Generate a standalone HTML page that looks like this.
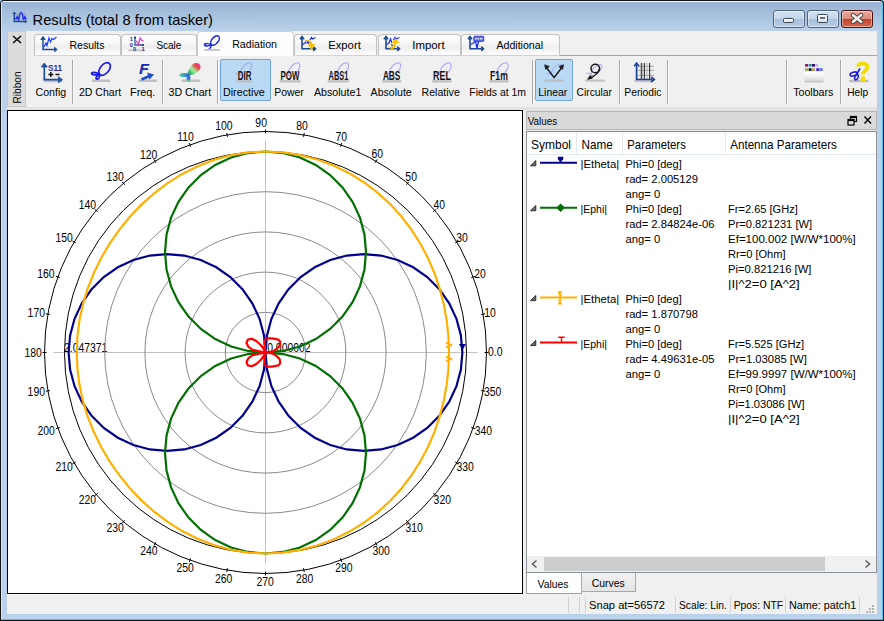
<!DOCTYPE html><html><head><meta charset="utf-8"><style>
html,body{margin:0;padding:0;}
body{width:884px;height:621px;overflow:hidden;position:relative;background:#a9d3ec;font-family:"Liberation Sans",sans-serif;}
.t{position:absolute;white-space:nowrap;line-height:1;}
</style></head><body>
<div style="position:absolute;left:0px;top:0px;width:884px;height:621px;background:#b9d1ea;border:1px solid #111;border-bottom:none;box-sizing:border-box;border-radius:4px 4px 0 0;"></div>
<div style="position:absolute;left:882px;top:3px;width:1px;height:617px;background:#3ec6f0;"></div>
<div style="position:absolute;left:883px;top:3px;width:1px;height:618px;background:#111;"></div>
<div style="position:absolute;left:3px;top:1px;width:877px;height:1px;background:#f4f8fb;"></div>
<div style="position:absolute;left:1px;top:2px;width:881px;height:29px;background:linear-gradient(#98b3d3,#b9d1ea);"></div>
<div style="position:absolute;left:1px;top:2px;width:1px;height:619px;background:#d9e6f3;"></div>
<div style="position:absolute;left:1px;top:619px;width:882px;height:1px;background:#2ad2f2;"></div>
<div style="position:absolute;left:0px;top:620px;width:884px;height:1px;background:#111;"></div>
<svg style="position:absolute;left:0;top:0" width="40" height="30" viewBox="0 0 40 30"><path d="M15 14.5 H27 M15 17.5 H27 M17.5 11.5 V21 M25 11.5 V21" stroke="#8a9aa8" stroke-width="0.7" opacity="0.8"/><path d="M14.3 13 V21.5 H25.5" stroke="#1f4a95" stroke-width="1.5" fill="none"/><path d="M12.3 14 L14.3 11.5 L16.3 14 Z M25 19.5 L27.3 21.5 L25 23.5 Z" fill="#1f4a95"/><path d="M15.5 19.5 L17.3 16.8 L18.8 19.8 C19.5 14 20 12.5 21.2 12.5 C22.4 12.5 22.8 14 23.4 19.8 L24.6 16.8 L26.3 19.5" stroke="#2a2aff" stroke-width="1.5" fill="none"/></svg>
<div style="position:absolute;left:773px;top:10px;width:32px;height:18px;box-sizing:border-box;border:1px solid #52647c;border-radius:3px;background:linear-gradient(#d3e2f2 0%,#c2d5ea 48%,#a6bfdc 52%,#b8cee7 100%);box-shadow:inset 0 0 0 1px rgba(255,255,255,0.45);"></div>
<div style="position:absolute;left:807px;top:10px;width:32px;height:18px;box-sizing:border-box;border:1px solid #52647c;border-radius:3px;background:linear-gradient(#d3e2f2 0%,#c2d5ea 48%,#a6bfdc 52%,#b8cee7 100%);box-shadow:inset 0 0 0 1px rgba(255,255,255,0.45);"></div>
<div style="position:absolute;left:841px;top:10px;width:32px;height:18px;box-sizing:border-box;border:1px solid #4a1418;border-radius:3px;background:linear-gradient(#eaa99b 0%,#dc8e7d 48%,#c1452c 52%,#d36a50 100%);box-shadow:inset 0 0 0 1px rgba(255,255,255,0.45);"></div>
<div style="position:absolute;left:783px;top:18px;width:11px;height:5px;box-sizing:border-box;background:linear-gradient(#fff,#e0e0e0);border:1px solid #3b4658;border-radius:1.5px;"></div>
<div style="position:absolute;left:817px;top:14px;width:11px;height:9px;box-sizing:border-box;background:linear-gradient(#fff,#e0e0e0);border:1px solid #3b4658;border-radius:1.5px;"></div>
<div style="position:absolute;left:820px;top:17px;width:5px;height:2px;background:#5c6e88;"></div>
<svg style="position:absolute;left:849px;top:12px" width="16" height="13" viewBox="0 0 16 13">
<path d="M4 3.2 L12 9.8 M12 3.2 L4 9.8" stroke="#4a3a40" stroke-width="4.4" stroke-linecap="round"/>
<path d="M4 3.2 L12 9.8 M12 3.2 L4 9.8" stroke="#f6f6f6" stroke-width="2.6" stroke-linecap="round"/>
</svg>
<div style="position:absolute;left:7px;top:31px;width:870px;height:76px;background:#f0f0f0;"></div>
<div style="position:absolute;left:7px;top:107px;width:870px;height:3px;background:#e6e6e6;"></div>
<div style="position:absolute;left:7px;top:31px;width:19px;height:76px;box-sizing:border-box;background:#dcdcdc;border:1px solid #c9c9c9;"></div>
<svg style="position:absolute;left:12px;top:35px" width="10" height="9" viewBox="0 0 10 9"><path d="M1 1 L9 8 M9 1 L1 8" stroke="#000" stroke-width="1.4"/></svg>
<div style="position:absolute;left:560px;top:55px;width:317px;height:1px;background:#a5a5a5;"></div>
<div style="position:absolute;left:34px;top:55px;width:526px;height:1px;background:#d2d2d2;"></div>
<div style="position:absolute;left:34px;top:34px;width:87px;height:21px;box-sizing:border-box;border:1px solid #c2c2c2;border-bottom:none;border-radius:4px 4px 0 0;background:linear-gradient(#ffffff 0%,#f6f6f6 45%,#ededed 55%,#fdfdfd 100%);"></div>
<div style="position:absolute;left:121px;top:34px;width:76px;height:21px;box-sizing:border-box;border:1px solid #c2c2c2;border-bottom:none;border-radius:4px 4px 0 0;background:linear-gradient(#ffffff 0%,#f6f6f6 45%,#ededed 55%,#fdfdfd 100%);"></div>
<div style="position:absolute;left:294px;top:34px;width:83px;height:21px;box-sizing:border-box;border:1px solid #c2c2c2;border-bottom:none;border-radius:4px 4px 0 0;background:linear-gradient(#ffffff 0%,#f6f6f6 45%,#ededed 55%,#fdfdfd 100%);"></div>
<div style="position:absolute;left:378px;top:34px;width:83px;height:21px;box-sizing:border-box;border:1px solid #c2c2c2;border-bottom:none;border-radius:4px 4px 0 0;background:linear-gradient(#ffffff 0%,#f6f6f6 45%,#ededed 55%,#fdfdfd 100%);"></div>
<div style="position:absolute;left:461px;top:34px;width:99px;height:21px;box-sizing:border-box;border:1px solid #c2c2c2;border-bottom:none;border-radius:4px 4px 0 0;background:linear-gradient(#ffffff 0%,#f6f6f6 45%,#ededed 55%,#fdfdfd 100%);"></div>
<div style="position:absolute;left:197px;top:31px;width:97px;height:25px;box-sizing:border-box;border:1px solid #d0d0d0;border-bottom:none;border-radius:4px 4px 0 0;background:#fdfdfd;"></div>
<svg style="position:absolute;left:0;top:0;overflow:visible" width="884" height="60" viewBox="0 0 884 60"><path d="M43 38.5 V49.5 H55.5" stroke="#1f4a95" stroke-width="1.5" fill="none"/><path d="M40.8 39.5 L43 36.3 L45.2 39.5 Z M54.5 47.3 L57.2 49.5 L54.5 51.7 Z" fill="#1f4a95" stroke="#1f4a95" stroke-width="0.9"/><path d="M44 47 L46 43 L47 45.5 L49 38 L50.5 42 L52 38.5 L53.5 39.5 L56.5 37" stroke="#1a3cff" stroke-width="1.2" fill="none"/></svg>
<svg style="position:absolute;left:0;top:0;overflow:visible" width="884" height="60" viewBox="0 0 884 60"><rect x="128" y="49" width="17" height="2.5" rx="1.2" fill="#c4c4c4" opacity="0.8"/><text x="129.8" y="40.6" font-size="5.6" font-weight="bold" font-family="Liberation Sans" fill="#2a2a90">1</text><text x="129.8" y="47" font-size="5.6" font-weight="bold" font-family="Liberation Sans" fill="#2a2a90">0</text><text x="133" y="51.2" font-size="5.6" font-weight="bold" font-family="Liberation Sans" fill="#2a2a90">0</text><text x="141.5" y="51.2" font-size="5.6" font-weight="bold" font-family="Liberation Sans" fill="#2a2a90">1</text><path d="M135 37.5 V45 H143" stroke="#2f5aa0" stroke-width="1.3" fill="none"/><circle cx="135" cy="37.5" r="1.1" fill="#1a2a80"/><circle cx="143" cy="45" r="1.1" fill="#1a2a80"/><path d="M135.8 40.5 L138.5 44 L140.2 37.8 L141.6 40.5 L143.5 40.8" stroke="#e030d0" stroke-width="1.2" fill="none"/></svg>
<svg style="position:absolute;left:200px;top:33px;overflow:visible" width="24" height="20" viewBox="0 0 24 20"><ellipse cx="15" cy="7.5" rx="5.5" ry="3.2" transform="rotate(-50 15 7.5)" stroke="#1a2ae0" stroke-width="1.5" fill="none"/><path d="M12 11 C9 14 4 13 4.5 11.5 C5 10 10 10.5 11 12 C12 13.5 9.5 16 9 15" stroke="#1a2ae0" stroke-width="1.5" fill="none"/><rect x="4" y="16" width="16" height="2" fill="#c8c8c8" rx="1"/></svg>
<svg style="position:absolute;left:0;top:0;overflow:visible" width="884" height="60" viewBox="0 0 884 60"><path d="M302 38 V48.8 H314.5" stroke="#1f4a95" stroke-width="1.6" fill="none"/><path d="M299.8 39 L302 35.8 L304.2 39 Z M313.5 46.6 L316.2 48.8 L313.5 51 Z" fill="#1f4a95" stroke="#1f4a95" stroke-width="1"/><path d="M302.5 44.5 L305 43 L306.5 40.5 M310 40 L311.5 37.5 L312.5 39 L315.5 37.5" stroke="#1a2aff" stroke-width="1.3" fill="none"/><path d="M304.5 42 C307 38.5 311.5 39.5 312.5 44 L315.5 44.5 L311.5 50 L307.5 44.5 L310 44.5 C309.5 42.5 307 41.5 304.5 42 Z" fill="#f5c400"/><path d="M306.5 43.5 L308 42 L309 44" stroke="#1a2aff" stroke-width="1.1" fill="none"/></svg>
<svg style="position:absolute;left:0;top:0;overflow:visible" width="884" height="60" viewBox="0 0 884 60"><path d="M386 38 V48.8 H398.5" stroke="#1f4a95" stroke-width="1.6" fill="none"/><path d="M383.8 39 L386 35.8 L388.2 39 Z M397.5 46.6 L400.2 48.8 L397.5 51 Z" fill="#1f4a95" stroke="#1f4a95" stroke-width="1"/><path d="M386.5 44.5 L389 43 L390.5 39 L392 43 M393.5 40 L395 37.5 L396 39 L399.5 37.5" stroke="#1a2aff" stroke-width="1.3" fill="none"/><path d="M388 46.5 C390 50 395 50 396 45 L396.5 43 L399.5 43 L395.5 38 L391.5 43 L394 43 L393.5 45 C392.5 47 390 47.5 388 46.5 Z" fill="#f5c400"/><path d="M391.5 44 L392.5 46" stroke="#1a2aff" stroke-width="1.3" fill="none"/></svg>
<svg style="position:absolute;left:0;top:0;overflow:visible" width="884" height="60" viewBox="0 0 884 60"><path d="M470 38 V48.8 H482.5" stroke="#1f4a95" stroke-width="1.6" fill="none"/><path d="M467.8 39 L470 35.8 L472.2 39 Z M481.5 46.6 L484.2 48.8 L481.5 51 Z" fill="#1f4a95" stroke="#1f4a95" stroke-width="1"/><rect x="473.8" y="36.2" width="10" height="5.2" rx="0.8" fill="#5a6af0" stroke="#3a3ad0" stroke-width="0.9"/><path d="M475 38.8 H483" stroke="#e8ecff" stroke-width="1.6" stroke-dasharray="1.6 0.9"/><path d="M470.5 44.5 L473.5 43 L475 41.5 M475.5 41.5 L477 48 L478.5 41.5" stroke="#1a2aff" stroke-width="1.3" fill="none"/></svg>
<div style="position:absolute;left:72px;top:60px;width:1px;height:44px;background:#a8a8a8;"></div>
<div style="position:absolute;left:73px;top:60px;width:1px;height:44px;background:#fbfbfb;"></div>
<div style="position:absolute;left:162px;top:60px;width:1px;height:44px;background:#a8a8a8;"></div>
<div style="position:absolute;left:163px;top:60px;width:1px;height:44px;background:#fbfbfb;"></div>
<div style="position:absolute;left:217px;top:60px;width:1px;height:44px;background:#a8a8a8;"></div>
<div style="position:absolute;left:218px;top:60px;width:1px;height:44px;background:#fbfbfb;"></div>
<div style="position:absolute;left:532px;top:60px;width:1px;height:44px;background:#a8a8a8;"></div>
<div style="position:absolute;left:533px;top:60px;width:1px;height:44px;background:#fbfbfb;"></div>
<div style="position:absolute;left:619px;top:60px;width:1px;height:44px;background:#a8a8a8;"></div>
<div style="position:absolute;left:620px;top:60px;width:1px;height:44px;background:#fbfbfb;"></div>
<div style="position:absolute;left:667px;top:60px;width:1px;height:44px;background:#a8a8a8;"></div>
<div style="position:absolute;left:668px;top:60px;width:1px;height:44px;background:#fbfbfb;"></div>
<div style="position:absolute;left:786px;top:60px;width:1px;height:44px;background:#a8a8a8;"></div>
<div style="position:absolute;left:787px;top:60px;width:1px;height:44px;background:#fbfbfb;"></div>
<div style="position:absolute;left:840px;top:60px;width:1px;height:44px;background:#a8a8a8;"></div>
<div style="position:absolute;left:841px;top:60px;width:1px;height:44px;background:#fbfbfb;"></div>
<div style="position:absolute;left:220px;top:59px;width:51px;height:42px;box-sizing:border-box;border:1px solid #72a6dc;border-radius:2px;background:#b9d9f5;"></div>
<div style="position:absolute;left:535px;top:59px;width:38px;height:42px;box-sizing:border-box;border:1px solid #72a6dc;border-radius:2px;background:#b9d9f5;"></div>
<svg style="position:absolute;left:40px;top:58px;overflow:visible" width="26" height="26" viewBox="0 0 26 26"><rect x="3.5" y="21.8" width="19" height="2.5" rx="1.2" fill="#b4b4b4" opacity="0.8"/><path d="M4.3 7 V21.7 H20" stroke="#1f4f9f" stroke-width="1.7" fill="none"/><path d="M1.3 9 L4.3 5 L7.3 9 Z M18.5 18.7 L22.5 21.7 L18.5 24.7 Z" fill="#1f4f9f" stroke="#1f4f9f" stroke-width="0.8"/><text x="8" y="12.6" font-size="9.5" font-weight="bold" font-family="Liberation Sans" fill="#2a2aa8" textLength="14" lengthAdjust="spacingAndGlyphs">S11</text><path d="M8.3 16.5 H13.3 M10.8 14 V19 M15.5 16.5 H19.5" stroke="#111" stroke-width="1.5"/></svg>
<svg style="position:absolute;left:86px;top:58px;overflow:visible" width="30" height="26" viewBox="0 0 30 26"><rect x="5.5" y="21.5" width="19" height="2.5" rx="1.2" fill="#b4b4b4" opacity="0.8"/><ellipse cx="18.6" cy="11" rx="7.3" ry="4.4" transform="rotate(-50 18.6 11)" stroke="#1a1ae8" stroke-width="1.7" fill="none"/><path d="M13.5 16 C10 14 5.5 14 5.5 15.5 C5.5 17 10.5 17.5 13.5 16 C14.5 18.5 12 22 10.5 21 C9 20 11 17.5 13.5 16" stroke="#1a1ae8" stroke-width="1.7" fill="none"/></svg>
<svg style="position:absolute;left:134px;top:58px;overflow:visible" width="30" height="26" viewBox="0 0 30 26"><rect x="4" y="21.5" width="19" height="2.5" rx="1.2" fill="#b4b4b4" opacity="0.8"/><text x="5" y="16.3" font-size="14.5" font-weight="bold" font-style="italic" font-family="Liberation Sans" fill="#1a2ab0" textLength="10" lengthAdjust="spacingAndGlyphs">F</text><path d="M7.5 21.5 L15.5 18" stroke="#1a50d0" stroke-width="2.6"/><path d="M13 14.5 L20 16.5 L15.5 21.5 Z" fill="#1a50d0"/></svg>
<svg style="position:absolute;left:176px;top:58px;overflow:visible" width="30" height="26" viewBox="0 0 30 26"><defs><linearGradient id="g3d" x1="1" y1="0" x2="0" y2="1"><stop offset="0" stop-color="#ff30ff"/><stop offset="0.28" stop-color="#e84040"/><stop offset="0.55" stop-color="#a0f0a0"/><stop offset="0.78" stop-color="#40c060"/><stop offset="1" stop-color="#3050f0"/></linearGradient><linearGradient id="g3s" x1="0" y1="0" x2="1" y2="0"><stop offset="0" stop-color="#50e090"/><stop offset="1" stop-color="#3060f0"/></linearGradient></defs><rect x="5.5" y="21.5" width="19" height="2.5" rx="1.2" fill="#b4b4b4" opacity="0.8"/><ellipse cx="8" cy="17" rx="4.8" ry="2" fill="url(#g3s)"/><ellipse cx="12.5" cy="19.8" rx="1.9" ry="3.6" fill="#4070e0"/><ellipse cx="12.5" cy="22.5" rx="1.2" ry="1" fill="#40e080"/><path d="M11.2 17.2 C12 12 15 6 19.5 5 C23.5 4.2 25.5 7.5 24 11 C22 15 16 17.8 11.2 17.2 Z" fill="url(#g3d)"/></svg>
<svg style="position:absolute;left:0;top:0;overflow:visible" width="884" height="100" viewBox="0 0 884 100"><rect x="236.7" y="80" width="15.8" height="2.5" rx="1.2" fill="#b8b8b8" opacity="0.85"/><ellipse cx="246.0" cy="69.5" rx="8" ry="4" transform="rotate(-52 246.0 69.5)" stroke="#a8a8f4" stroke-width="1.1" fill="none"/><path d="M241.5 75.0 C238.0 73.5 235.0 72.5 236.0 74.0" stroke="#a8a8f4" stroke-width="1.1" fill="none"/><text x="237.7" y="79.9" font-size="13.4" font-weight="bold" font-family="Liberation Sans" fill="#111" stroke="#fff" stroke-width="1.2" stroke-opacity="0.35" paint-order="stroke" textLength="13.8" lengthAdjust="spacingAndGlyphs">DIR</text></svg>
<svg style="position:absolute;left:0;top:0;overflow:visible" width="884" height="100" viewBox="0 0 884 100"><rect x="279.6" y="80" width="20.9" height="2.5" rx="1.2" fill="#b8b8b8" opacity="0.85"/><ellipse cx="294.0" cy="69.5" rx="8" ry="4" transform="rotate(-52 294.0 69.5)" stroke="#a8a8f4" stroke-width="1.1" fill="none"/><path d="M289.5 75.0 C286.0 73.5 283.0 72.5 284.0 74.0" stroke="#a8a8f4" stroke-width="1.1" fill="none"/><text x="280.6" y="79.9" font-size="13.4" font-weight="bold" font-family="Liberation Sans" fill="#111" stroke="#fff" stroke-width="1.2" stroke-opacity="0.35" paint-order="stroke" textLength="18.9" lengthAdjust="spacingAndGlyphs">POW</text></svg>
<svg style="position:absolute;left:0;top:0;overflow:visible" width="884" height="100" viewBox="0 0 884 100"><rect x="327.6" y="80" width="21.7" height="2.5" rx="1.2" fill="#b8b8b8" opacity="0.85"/><ellipse cx="342.8" cy="69.5" rx="8" ry="4" transform="rotate(-52 342.8 69.5)" stroke="#a8a8f4" stroke-width="1.1" fill="none"/><path d="M338.3 75.0 C334.8 73.5 331.8 72.5 332.8 74.0" stroke="#a8a8f4" stroke-width="1.1" fill="none"/><text x="328.6" y="79.9" font-size="13.4" font-weight="bold" font-family="Liberation Sans" fill="#111" stroke="#fff" stroke-width="1.2" stroke-opacity="0.35" paint-order="stroke" textLength="19.7" lengthAdjust="spacingAndGlyphs">ABS1</text></svg>
<svg style="position:absolute;left:0;top:0;overflow:visible" width="884" height="100" viewBox="0 0 884 100"><rect x="381.9" y="80" width="19.4" height="2.5" rx="1.2" fill="#b8b8b8" opacity="0.85"/><ellipse cx="394.8" cy="69.5" rx="8" ry="4" transform="rotate(-52 394.8 69.5)" stroke="#a8a8f4" stroke-width="1.1" fill="none"/><path d="M390.3 75.0 C386.8 73.5 383.8 72.5 384.8 74.0" stroke="#a8a8f4" stroke-width="1.1" fill="none"/><text x="382.9" y="79.9" font-size="13.4" font-weight="bold" font-family="Liberation Sans" fill="#111" stroke="#fff" stroke-width="1.2" stroke-opacity="0.35" paint-order="stroke" textLength="17.4" lengthAdjust="spacingAndGlyphs">ABS</text></svg>
<svg style="position:absolute;left:0;top:0;overflow:visible" width="884" height="100" viewBox="0 0 884 100"><rect x="432.1" y="80" width="19.7" height="2.5" rx="1.2" fill="#b8b8b8" opacity="0.85"/><ellipse cx="445.3" cy="69.5" rx="8" ry="4" transform="rotate(-52 445.3 69.5)" stroke="#a8a8f4" stroke-width="1.1" fill="none"/><path d="M440.8 75.0 C437.3 73.5 434.3 72.5 435.3 74.0" stroke="#a8a8f4" stroke-width="1.1" fill="none"/><text x="433.1" y="79.9" font-size="13.4" font-weight="bold" font-family="Liberation Sans" fill="#111" stroke="#fff" stroke-width="1.2" stroke-opacity="0.35" paint-order="stroke" textLength="17.7" lengthAdjust="spacingAndGlyphs">REL</text></svg>
<svg style="position:absolute;left:0;top:0;overflow:visible" width="884" height="100" viewBox="0 0 884 100"><rect x="489.1" y="80" width="19.7" height="2.5" rx="1.2" fill="#b8b8b8" opacity="0.85"/><ellipse cx="502.3" cy="69.5" rx="8" ry="4" transform="rotate(-52 502.3 69.5)" stroke="#a8a8f4" stroke-width="1.1" fill="none"/><path d="M497.8 75.0 C494.3 73.5 491.3 72.5 492.3 74.0" stroke="#a8a8f4" stroke-width="1.1" fill="none"/><text x="490.1" y="79.9" font-size="13.4" font-weight="bold" font-family="Liberation Sans" fill="#111" stroke="#fff" stroke-width="1.2" stroke-opacity="0.35" paint-order="stroke" textLength="17.7" lengthAdjust="spacingAndGlyphs">F1m</text></svg>
<svg style="position:absolute;left:0;top:0;overflow:visible" width="884" height="60" viewBox="0 0 884 60"><rect x="544" y="79.5" width="20" height="2.2" rx="1.1" fill="#b8b8b8" opacity="0.8"/><ellipse cx="556.5" cy="70" rx="7" ry="3.3" transform="rotate(-52 556.5 70)" stroke="#a8a8f0" stroke-width="1" fill="none"/><path d="M552 75 C548.5 73.5 546 73 546.5 74.5" stroke="#a8a8f0" stroke-width="1" fill="none"/><path d="M546 67 L554.1 77.6 L562.2 67" stroke="#1a1a1a" stroke-width="1.5" fill="none"/><path d="M544.6 64.8 L549.4 66.4 L545.6 69.4 Z M563.6 64.8 L558.8 66.4 L562.6 69.4 Z" fill="#1a1a1a" stroke="#1a1a1a" stroke-width="0.6"/></svg>
<svg style="position:absolute;left:0;top:0;overflow:visible" width="884" height="60" viewBox="0 0 884 60"><rect x="585" y="79.5" width="20" height="2.2" rx="1.1" fill="#b8b8b8" opacity="0.8"/><ellipse cx="596.5" cy="70" rx="7" ry="3.3" transform="rotate(-45 596.5 70)" stroke="#a8a8f0" stroke-width="1" fill="none"/><path d="M592 74 C588.5 73 586 72.5 586.5 74" stroke="#a8a8f0" stroke-width="1" fill="none"/><circle cx="595.3" cy="68.5" r="4.3" stroke="#1a1a1a" stroke-width="1.5" fill="none"/><path d="M599.6 68.5 C599 73 595 76 589 78.8" stroke="#1a1a1a" stroke-width="1.5" fill="none"/><path d="M587 79.8 L590.2 74.8 L592.8 78.6 Z" fill="#111"/></svg>
<svg style="position:absolute;left:0;top:0;overflow:visible" width="884" height="60" viewBox="0 0 884 60"><rect x="634" y="79.8" width="19" height="2.4" rx="1.2" fill="#bcbcbc" opacity="0.8"/><path d="M638 66.3 H654 M638 70.4 H654 M638 75.3 H654" stroke="#9a9a9a" stroke-width="0.9"/><path d="M641.7 63 V79.5 M644.4 63 V79.5 M649.6 63 V79.5" stroke="#333" stroke-width="1.1"/><path d="M640.6 63 V79.5 M647 63 V79.5" stroke="#aaa" stroke-width="0.8"/><path d="M636.6 64.5 V79.5 H652.5" stroke="#1a3f95" stroke-width="1.7" fill="none"/><path d="M634.2 66.2 L636.6 63 L639 66.2" stroke="#1a3f95" stroke-width="1.6" fill="none"/><path d="M651 77 L654.3 79.5 L651 82" stroke="#1a3f95" stroke-width="1.6" fill="none"/></svg>
<svg style="position:absolute;left:0;top:0;overflow:visible" width="884" height="60" viewBox="0 0 884 60"><defs><linearGradient id="gtb" x1="0" y1="0" x2="0" y2="1"><stop offset="0" stop-color="#ffffff"/><stop offset="0.5" stop-color="#f0f0f0"/><stop offset="1" stop-color="#d4d4d4"/></linearGradient></defs><rect x="804.5" y="63" width="19" height="9" fill="#ececec"/><rect x="805" y="64" width="3" height="2.6" fill="#a0106e"/><rect x="808.6" y="64" width="3" height="2.6" fill="#2a8a9a"/><rect x="812" y="64" width="3" height="2.6" fill="#2a1070"/><rect x="815.4" y="64" width="3" height="2.6" fill="#c8b0e0"/><rect x="818.8" y="64" width="3" height="2.6" fill="#d8f4ff"/><rect x="805" y="68.3" width="3" height="2.6" fill="#98b040"/><rect x="808.6" y="68.3" width="3" height="2.6" fill="#080820"/><rect x="812" y="68.3" width="3" height="2.6" fill="#b0a060"/><rect x="816.3" y="68.3" width="3" height="2.6" fill="#3010f0"/><rect x="819.7" y="68.3" width="3" height="2.6" fill="#5868e0"/><rect x="804.5" y="72" width="19" height="9.5" fill="url(#gtb)"/><rect x="804.5" y="81" width="19" height="1.5" fill="#c4c4c4"/></svg>
<svg style="position:absolute;left:0;top:0;overflow:visible" width="884" height="60" viewBox="0 0 884 60"><rect x="849" y="79.8" width="19.5" height="2.4" rx="1.2" fill="#b4b4b4" opacity="0.85"/><path d="M858 66.5 C858 62.5 867.5 62.5 867.5 67 C867.5 70.5 862.8 71 862.8 74.5" stroke="#f4dc00" stroke-width="3.8" fill="none"/><rect x="860.8" y="76.5" width="4.2" height="5.5" fill="#f4dc00"/><ellipse cx="853.6" cy="74" rx="3.6" ry="1.9" transform="rotate(-15 853.6 74)" stroke="#1a1ae0" stroke-width="1.6" fill="none"/><ellipse cx="856.5" cy="77.2" rx="1.5" ry="2.8" transform="rotate(25 856.5 77.2)" stroke="#1a1ae0" stroke-width="1.5" fill="none"/><path d="M856.5 74.5 L860 68.5" stroke="#1a1ae0" stroke-width="1.6"/></svg>
<div style="position:absolute;left:7px;top:110px;width:516px;height:484px;box-sizing:border-box;border:1px solid #000;background:#fff;"></div>
<svg style="position:absolute;left:0;top:0" width="884" height="621" viewBox="0 0 884 621" font-family="Liberation Sans, sans-serif"><path d="M53.5 352.5 H477.5 M265.5 140.5 V564.5" stroke="#c0c0c0" stroke-width="1"/><text x="64.1" y="351.6" font-size="10.4" text-anchor="start" transform="translate(0 351.6) scale(1 1.17) translate(0 -351.6)" fill="#000">2.047371</text><text x="267.2" y="351.6" font-size="10.4" text-anchor="start" transform="translate(0 351.6) scale(1 1.17) translate(0 -351.6)" fill="#000">0.000002</text><circle cx="265.5" cy="352.5" r="40.20" stroke="#8a8a8a" stroke-width="1" fill="none"/><circle cx="265.5" cy="352.5" r="80.40" stroke="#8a8a8a" stroke-width="1" fill="none"/><circle cx="265.5" cy="352.5" r="120.60" stroke="#8a8a8a" stroke-width="1" fill="none"/><circle cx="265.5" cy="352.5" r="160.80" stroke="#8a8a8a" stroke-width="1" fill="none"/><circle cx="265.5" cy="352.5" r="201" stroke="#000" stroke-width="1" fill="none"/><circle cx="265.5" cy="352.5" r="221" stroke="#000" stroke-width="1" fill="none"/><path d="M484.50 352.50 L488.50 352.50 M481.17 314.47 L485.11 313.78 M471.29 277.60 L475.05 276.23 M455.16 243.00 L458.62 241.00 M433.26 211.73 L436.33 209.16 M406.27 184.74 L408.84 181.67 M375.00 162.84 L377.00 159.38 M340.40 146.71 L341.77 142.95 M303.53 136.83 L304.22 132.89 M265.50 133.50 L265.50 129.50 M227.47 136.83 L226.78 132.89 M190.60 146.71 L189.23 142.95 M156.00 162.84 L154.00 159.38 M124.73 184.74 L122.16 181.67 M97.74 211.73 L94.67 209.16 M75.84 243.00 L72.38 241.00 M59.71 277.60 L55.95 276.23 M49.83 314.47 L45.89 313.78 M46.50 352.50 L42.50 352.50 M49.83 390.53 L45.89 391.22 M59.71 427.40 L55.95 428.77 M75.84 462.00 L72.38 464.00 M97.74 493.27 L94.67 495.84 M124.73 520.26 L122.16 523.33 M156.00 542.16 L154.00 545.62 M190.60 558.29 L189.23 562.05 M227.47 568.17 L226.78 572.11 M265.50 571.50 L265.50 575.50 M303.53 568.17 L304.22 572.11 M340.40 558.29 L341.77 562.05 M375.00 542.16 L377.00 545.62 M406.27 520.26 L408.84 523.33 M433.26 493.27 L436.33 495.84 M455.16 462.00 L458.62 464.00 M471.29 427.40 L475.05 428.77 M481.17 390.53 L485.11 391.22" stroke="#000" stroke-width="1"/><text x="495.20" y="356.35" font-size="10.4" text-anchor="middle" transform="translate(0 356.35) scale(1 1.17) translate(0 -356.35)" fill="#000">0.0</text><text x="489.95" y="317.05" font-size="10.4" text-anchor="middle" transform="translate(0 317.05) scale(1 1.17) translate(0 -317.05)" fill="#000">10</text><text x="480.00" y="278.05" font-size="10.4" text-anchor="middle" transform="translate(0 278.05) scale(1 1.17) translate(0 -278.05)" fill="#000">20</text><text x="461.95" y="242.45" font-size="10.4" text-anchor="middle" transform="translate(0 242.45) scale(1 1.17) translate(0 -242.45)" fill="#000">30</text><text x="439.25" y="208.85" font-size="10.4" text-anchor="middle" transform="translate(0 208.85) scale(1 1.17) translate(0 -208.85)" fill="#000">40</text><text x="411.15" y="181.35" font-size="10.4" text-anchor="middle" transform="translate(0 181.35) scale(1 1.17) translate(0 -181.35)" fill="#000">50</text><text x="377.20" y="158.35" font-size="10.4" text-anchor="middle" transform="translate(0 158.35) scale(1 1.17) translate(0 -158.35)" fill="#000">60</text><text x="341.25" y="141.15" font-size="10.4" text-anchor="middle" transform="translate(0 141.15) scale(1 1.17) translate(0 -141.15)" fill="#000">70</text><text x="302.00" y="129.85" font-size="10.4" text-anchor="middle" transform="translate(0 129.85) scale(1 1.17) translate(0 -129.85)" fill="#000">80</text><text x="261.15" y="127.35" font-size="10.4" text-anchor="middle" transform="translate(0 127.35) scale(1 1.17) translate(0 -127.35)" fill="#000">90</text><text x="224.00" y="130.35" font-size="10.4" text-anchor="middle" transform="translate(0 130.35) scale(1 1.17) translate(0 -130.35)" fill="#000">100</text><text x="185.45" y="140.95" font-size="10.4" text-anchor="middle" transform="translate(0 140.95) scale(1 1.17) translate(0 -140.95)" fill="#000">110</text><text x="148.55" y="158.65" font-size="10.4" text-anchor="middle" transform="translate(0 158.65) scale(1 1.17) translate(0 -158.65)" fill="#000">120</text><text x="115.25" y="180.95" font-size="10.4" text-anchor="middle" transform="translate(0 180.95) scale(1 1.17) translate(0 -180.95)" fill="#000">130</text><text x="87.30" y="209.35" font-size="10.4" text-anchor="middle" transform="translate(0 209.35) scale(1 1.17) translate(0 -209.35)" fill="#000">140</text><text x="64.25" y="241.85" font-size="10.4" text-anchor="middle" transform="translate(0 241.85) scale(1 1.17) translate(0 -241.85)" fill="#000">150</text><text x="45.85" y="278.05" font-size="10.4" text-anchor="middle" transform="translate(0 278.05) scale(1 1.17) translate(0 -278.05)" fill="#000">160</text><text x="36.30" y="317.35" font-size="10.4" text-anchor="middle" transform="translate(0 317.35) scale(1 1.17) translate(0 -317.35)" fill="#000">170</text><text x="33.05" y="356.85" font-size="10.4" text-anchor="middle" transform="translate(0 356.85) scale(1 1.17) translate(0 -356.85)" fill="#000">180</text><text x="36.30" y="396.35" font-size="10.4" text-anchor="middle" transform="translate(0 396.35) scale(1 1.17) translate(0 -396.35)" fill="#000">190</text><text x="46.20" y="435.35" font-size="10.4" text-anchor="middle" transform="translate(0 435.35) scale(1 1.17) translate(0 -435.35)" fill="#000">200</text><text x="64.25" y="470.75" font-size="10.4" text-anchor="middle" transform="translate(0 470.75) scale(1 1.17) translate(0 -470.75)" fill="#000">210</text><text x="87.30" y="504.35" font-size="10.4" text-anchor="middle" transform="translate(0 504.35) scale(1 1.17) translate(0 -504.35)" fill="#000">220</text><text x="115.25" y="531.95" font-size="10.4" text-anchor="middle" transform="translate(0 531.95) scale(1 1.17) translate(0 -531.95)" fill="#000">230</text><text x="148.95" y="555.05" font-size="10.4" text-anchor="middle" transform="translate(0 555.05) scale(1 1.17) translate(0 -555.05)" fill="#000">240</text><text x="185.10" y="572.05" font-size="10.4" text-anchor="middle" transform="translate(0 572.05) scale(1 1.17) translate(0 -572.05)" fill="#000">250</text><text x="223.65" y="583.35" font-size="10.4" text-anchor="middle" transform="translate(0 583.35) scale(1 1.17) translate(0 -583.35)" fill="#000">260</text><text x="265.25" y="586.25" font-size="10.4" text-anchor="middle" transform="translate(0 586.25) scale(1 1.17) translate(0 -586.25)" fill="#000">270</text><text x="304.60" y="582.75" font-size="10.4" text-anchor="middle" transform="translate(0 582.75) scale(1 1.17) translate(0 -582.75)" fill="#000">280</text><text x="343.90" y="572.05" font-size="10.4" text-anchor="middle" transform="translate(0 572.05) scale(1 1.17) translate(0 -572.05)" fill="#000">290</text><text x="381.15" y="555.05" font-size="10.4" text-anchor="middle" transform="translate(0 555.05) scale(1 1.17) translate(0 -555.05)" fill="#000">300</text><text x="414.10" y="532.05" font-size="10.4" text-anchor="middle" transform="translate(0 532.05) scale(1 1.17) translate(0 -532.05)" fill="#000">310</text><text x="442.30" y="504.35" font-size="10.4" text-anchor="middle" transform="translate(0 504.35) scale(1 1.17) translate(0 -504.35)" fill="#000">320</text><text x="465.10" y="470.75" font-size="10.4" text-anchor="middle" transform="translate(0 470.75) scale(1 1.17) translate(0 -470.75)" fill="#000">330</text><text x="483.35" y="435.35" font-size="10.4" text-anchor="middle" transform="translate(0 435.35) scale(1 1.17) translate(0 -435.35)" fill="#000">340</text><text x="492.75" y="396.35" font-size="10.4" text-anchor="middle" transform="translate(0 396.35) scale(1 1.17) translate(0 -396.35)" fill="#000">350</text><path d="M462.40,352.50 L460.90,335.40 L456.46,318.83 L449.21,303.27 L439.37,289.22 L427.23,277.08 L413.18,267.24 L397.62,259.99 L381.05,255.55 L363.95,254.05 L346.85,255.55 L330.28,259.99 L314.73,267.24 L300.67,277.08 L288.53,289.22 L278.69,303.27 L271.44,318.83 L267.00,335.40 L265.50,352.50 L264.00,335.40 L259.56,318.83 L252.31,303.27 L242.47,289.22 L230.33,277.08 L216.28,267.24 L200.72,259.99 L184.15,255.55 L167.05,254.05 L149.95,255.55 L133.38,259.99 L117.83,267.24 L103.77,277.08 L91.63,289.22 L81.79,303.28 L74.54,318.83 L70.10,335.40 L68.60,352.50 L70.10,369.60 L74.54,386.17 L81.79,401.72 L91.63,415.78 L103.77,427.92 L117.83,437.76 L133.38,445.01 L149.95,449.45 L167.05,450.95 L184.15,449.45 L200.72,445.01 L216.27,437.76 L230.33,427.92 L242.47,415.78 L252.31,401.72 L259.56,386.17 L264.00,369.60 L265.50,352.50 L267.00,369.60 L271.44,386.17 L278.69,401.72 L288.53,415.78 L300.67,427.92 L314.72,437.76 L330.28,445.01 L346.85,449.45 L363.95,450.95 L381.05,449.45 L397.62,445.01 L413.18,437.76 L427.23,427.92 L439.37,415.78 L449.21,401.72 L456.46,386.17 L460.90,369.60 L462.40,352.50Z" stroke="#00008c" stroke-width="2.2" fill="none"/><path d="M265.50,352.50 L282.95,350.97 L299.87,346.44 L315.75,339.04 L330.10,328.99 L342.49,316.60 L352.54,302.25 L359.94,286.37 L364.47,269.45 L366.00,252.00 L364.47,234.55 L359.94,217.63 L352.54,201.75 L342.49,187.40 L330.10,175.01 L315.75,164.96 L299.87,157.56 L282.95,153.03 L265.50,151.50 L248.05,153.03 L231.13,157.56 L215.25,164.96 L200.90,175.01 L188.51,187.40 L178.46,201.75 L171.06,217.63 L166.53,234.55 L165.00,252.00 L166.53,269.45 L171.06,286.37 L178.46,302.25 L188.51,316.60 L200.90,328.99 L215.25,339.04 L231.13,346.44 L248.05,350.97 L265.50,352.50 L248.05,354.03 L231.13,358.56 L215.25,365.96 L200.90,376.01 L188.51,388.40 L178.46,402.75 L171.06,418.63 L166.53,435.55 L165.00,453.00 L166.53,470.45 L171.06,487.37 L178.46,503.25 L188.51,517.60 L200.90,529.99 L215.25,540.04 L231.13,547.44 L248.05,551.97 L265.50,553.50 L282.95,551.97 L299.87,547.44 L315.75,540.04 L330.10,529.99 L342.49,517.60 L352.54,503.25 L359.94,487.37 L364.47,470.45 L366.00,453.00 L364.47,435.55 L359.94,418.63 L352.54,402.75 L342.49,388.40 L330.10,376.01 L315.75,365.96 L299.87,358.56 L282.95,354.03 L265.50,352.50Z" stroke="#007000" stroke-width="2.2" fill="none"/><path d="M449.00,352.50 L448.43,336.50 L446.73,320.54 L443.88,304.70 L439.86,289.04 L434.64,273.63 L428.20,258.56 L420.53,243.95 L411.61,229.90 L401.44,216.56 L390.05,204.06 L377.49,192.57 L363.81,182.22 L349.13,173.16 L333.55,165.55 L317.22,159.48 L300.31,155.07 L283.01,152.40 L265.50,151.50 L248.00,152.45 L230.72,155.27 L213.89,159.87 L197.67,166.15 L182.23,173.93 L167.67,183.05 L154.06,193.34 L141.44,204.65 L129.84,216.84 L119.28,229.80 L109.76,243.45 L101.33,257.72 L94.04,272.55 L87.93,287.87 L83.08,303.62 L79.56,319.71 L77.42,336.04 L76.70,352.50 L77.42,368.96 L79.56,385.29 L83.08,401.38 L87.93,417.13 L94.04,432.45 L101.33,447.28 L109.76,461.55 L119.28,475.20 L129.84,488.16 L141.44,500.35 L154.06,511.66 L167.67,521.95 L182.23,531.07 L197.67,538.85 L213.89,545.13 L230.72,549.73 L248.00,552.55 L265.50,553.50 L283.01,552.60 L300.31,549.93 L317.22,545.52 L333.55,539.45 L349.13,531.84 L363.81,522.78 L377.49,512.43 L390.05,500.94 L401.44,488.44 L411.61,475.10 L420.53,461.05 L428.20,446.44 L434.64,431.37 L439.86,415.96 L443.88,400.30 L446.73,384.46 L448.43,368.50 L449.00,352.50Z" stroke="#ffb000" stroke-width="2.2" fill="none"/><path d="M265.50,352.50 L252.70,349.80 L248.30,346.70 L246.50,342.70 L247.90,339.60 L251.80,338.70 L256.30,341.00 L260.70,345.00 L263.40,348.50Z M265.50,352.50 L252.70,355.20 L248.30,358.30 L246.50,362.30 L247.90,365.40 L251.80,366.30 L256.30,364.00 L260.70,360.00 L263.40,356.50Z M265.50,352.50 L264.60,345.40 L264.60,340.10 L266.90,338.30 L272.20,338.30 L278.40,339.60 L280.20,341.80 L279.80,345.40 L276.70,348.90 L272.20,351.60Z M265.50,352.50 L264.60,359.60 L264.60,364.90 L266.90,366.70 L272.20,366.70 L278.40,365.40 L280.20,363.20 L279.80,359.60 L276.70,356.10 L272.20,353.40Z" stroke="#ff0000" stroke-width="2.2" fill="none" stroke-linejoin="round"/><path d="M459 344 L466 344 L462.5 350 Z" fill="#00008c"/><path d="M446 342.5 L452 346 M446 347.5 L452 344 M446 361.5 L452 358 M446 356.5 L452 360" stroke="#ffb000" stroke-width="1.6"/></svg>
<div style="position:absolute;left:523px;top:107px;width:3px;height:487px;background:#f0f0f0;"></div>
<div style="position:absolute;left:7px;top:107px;width:870px;height:3px;background:#e3e3e3;"></div>
<div style="position:absolute;left:7px;top:110px;width:1px;height:0px;"></div>
<div style="position:absolute;left:523px;top:107px;width:354px;height:4px;background:#e3e3e3;"></div>
<div style="position:absolute;left:526px;top:111px;width:351px;height:19px;box-sizing:border-box;background:#dadada;border:1px solid #b4b4b4;"></div>
<div style="position:absolute;left:526px;top:130px;width:351px;height:1px;background:#eeeeee;"></div>
<svg style="position:absolute;left:846px;top:114px" width="30" height="14" viewBox="0 0 30 14"><rect x="4.5" y="2.5" width="6" height="5" fill="none" stroke="#000" stroke-width="1.2"/><rect x="4.5" y="2.5" width="6" height="1.6" fill="#000"/><rect x="2" y="5.5" width="6" height="5.5" fill="#dadada" stroke="#000" stroke-width="1.2"/><rect x="2" y="5.5" width="6" height="1.6" fill="#000"/><path d="M18.5 2.5 L25 9.5 M25 2.5 L18.5 9.5" stroke="#000" stroke-width="1.4"/></svg>
<div style="position:absolute;left:526px;top:131px;width:351px;height:442px;box-sizing:border-box;background:#fff;border:1px solid #8f959c;border-top:1px solid #828790;"></div>
<div style="position:absolute;left:527px;top:132px;width:349px;height:23px;background:#fff;border-bottom:1px solid #dfe8f3;box-sizing:border-box;"></div>
<div style="position:absolute;left:576px;top:132px;width:1px;height:23px;background:#e3eaf3;"></div>
<div style="position:absolute;left:622px;top:132px;width:1px;height:23px;background:#e3eaf3;"></div>
<div style="position:absolute;left:725px;top:132px;width:1px;height:23px;background:#e3eaf3;"></div>
<svg style="position:absolute;left:0;top:0" width="884" height="621" viewBox="0 0 884 621"><path d="M530.5 165.8 L535.8 165.8 L535.8 160.60000000000002 Z" fill="#707070" stroke="#202020" stroke-width="0.9" stroke-linejoin="round"/><path d="M540 162.8 H577" stroke="#00008c" stroke-width="2"/><path d="M557.8 156.8 H563.3 V159.20000000000002 L561.6 161.0 V162.8 H559.5 V161.0 L557.8 159.20000000000002 Z" fill="#00008c"/><path d="M530.5 210.74 L535.8 210.74 L535.8 205.54000000000002 Z" fill="#707070" stroke="#202020" stroke-width="0.9" stroke-linejoin="round"/><path d="M540 207.74 H577" stroke="#007000" stroke-width="2"/><path d="M560.6 203.44 L564.9 207.74 L560.6 212.04000000000002 L556.3 207.74 Z" fill="#007000"/><path d="M530.5 300.62 L535.8 300.62 L535.8 295.42 Z" fill="#707070" stroke="#202020" stroke-width="0.9" stroke-linejoin="round"/><path d="M540 297.62 H577" stroke="#ffb000" stroke-width="2"/><path d="M560 291.62 V304.12 M558 292.12 H562 M558 303.62 H562 M558.5 294.12 L561.5 295.62 M558.5 301.12 L561.5 299.62" stroke="#ffb000" stroke-width="1.6"/><path d="M530.5 345.56 L535.8 345.56 L535.8 340.36 Z" fill="#707070" stroke="#202020" stroke-width="0.9" stroke-linejoin="round"/><path d="M540 342.56 H577" stroke="#ff0000" stroke-width="2"/><path d="M558.3 337.16 H564.7 M561.5 337.16 V342.56" stroke="#ff0000" stroke-width="1.5"/></svg>
<div style="position:absolute;left:527px;top:556px;width:349px;height:16px;background:#f0f0f0;"></div>
<div style="position:absolute;left:544px;top:557px;width:281px;height:14px;background:#cdcdcd;"></div>
<svg style="position:absolute;left:527px;top:556px" width="349" height="16" viewBox="0 0 349 16"><path d="M9.5 4.5 L5.5 8 L9.5 11.5" stroke="#606060" stroke-width="1.6" fill="none"/><path d="M338.5 4.5 L342.5 8 L338.5 11.5" stroke="#606060" stroke-width="1.6" fill="none"/></svg>
<div style="position:absolute;left:526px;top:572px;width:351px;height:1px;background:#8a9099;"></div>
<div style="position:absolute;left:526px;top:572px;width:351px;height:23px;background:#f0f0f0;"></div>
<div style="position:absolute;left:526px;top:572px;width:1px;height:22px;background:#8a9099;"></div>
<div style="position:absolute;left:526px;top:573px;width:56px;height:21px;box-sizing:border-box;background:#fff;border:1px solid #a0a0a0;border-top:none;"></div>
<div style="position:absolute;left:581px;top:573px;width:55px;height:19px;box-sizing:border-box;background:linear-gradient(#f2f2f2,#e4e4e4);border:1px solid #a8a8a8;border-top:none;"></div>
<div style="position:absolute;left:526px;top:572px;width:351px;height:1px;background:#8a9099;"></div>
<div style="position:absolute;left:7px;top:594px;width:870px;height:20px;background:#f0f0f0;"></div>
<div style="position:absolute;left:7px;top:594px;width:516px;height:1px;background:#fff;"></div>
<div style="position:absolute;left:568px;top:597px;width:1px;height:16px;background:#d0d0d0;"></div>
<div style="position:absolute;left:579px;top:597px;width:1px;height:16px;background:#d0d0d0;"></div>
<div style="position:absolute;left:585px;top:597px;width:1px;height:16px;background:#d0d0d0;"></div>
<div style="position:absolute;left:675px;top:597px;width:1px;height:16px;background:#d0d0d0;"></div>
<div style="position:absolute;left:730px;top:597px;width:1px;height:16px;background:#d0d0d0;"></div>
<div style="position:absolute;left:785px;top:597px;width:1px;height:16px;background:#d0d0d0;"></div>
<div style="position:absolute;left:859px;top:597px;width:1px;height:16px;background:#d0d0d0;"></div>
<svg style="position:absolute;left:864px;top:604px" width="12" height="10" viewBox="0 0 12 10"><g fill="#b4b4b4"><rect x="8" y="1" width="2" height="2"/><rect x="5" y="4" width="2" height="2"/><rect x="8" y="4" width="2" height="2"/><rect x="2" y="7" width="2" height="2"/><rect x="5" y="7" width="2" height="2"/><rect x="8" y="7" width="2" height="2"/></g></svg>
<svg style="position:absolute;left:0;top:0" width="884" height="621" viewBox="0 0 884 621" font-family="Liberation Sans, sans-serif"><text x="32.6" y="25.1" font-size="14.3" fill="#000" font-weight="normal" text-anchor="start" textLength="180.4" lengthAdjust="spacingAndGlyphs">Results (total 8 from tasker)</text><text transform="translate(21.1 103.5) rotate(-90)" font-size="11" textLength="32" lengthAdjust="spacingAndGlyphs">Ribbon</text><text x="69.5" y="48.7" font-size="11" fill="#000" font-weight="normal" text-anchor="start" textLength="35" lengthAdjust="spacingAndGlyphs">Results</text><text x="156.4" y="48.7" font-size="11" fill="#000" font-weight="normal" text-anchor="start" textLength="24.9" lengthAdjust="spacingAndGlyphs">Scale</text><text x="232.2" y="48.4" font-size="11" fill="#000" font-weight="normal" text-anchor="start" textLength="44.8" lengthAdjust="spacingAndGlyphs">Radiation</text><text x="328.2" y="48.7" font-size="11" fill="#000" font-weight="normal" text-anchor="start" textLength="32.6" lengthAdjust="spacingAndGlyphs">Export</text><text x="412.3" y="48.7" font-size="11" fill="#000" font-weight="normal" text-anchor="start" textLength="32.3" lengthAdjust="spacingAndGlyphs">Import</text><text x="496.5" y="48.7" font-size="11" fill="#000" font-weight="normal" text-anchor="start" textLength="46.5" lengthAdjust="spacingAndGlyphs">Additional</text><text x="35.6" y="96" font-size="11.2" fill="#000" font-weight="normal" text-anchor="start" textLength="30.6" lengthAdjust="spacingAndGlyphs">Config</text><text x="79" y="96" font-size="11.2" fill="#000" font-weight="normal" text-anchor="start" textLength="42.1" lengthAdjust="spacingAndGlyphs">2D Chart</text><text x="130" y="96" font-size="11.2" fill="#000" font-weight="normal" text-anchor="start" textLength="25.4" lengthAdjust="spacingAndGlyphs">Freq.</text><text x="168.6" y="96" font-size="11.2" fill="#000" font-weight="normal" text-anchor="start" textLength="42.5" lengthAdjust="spacingAndGlyphs">3D Chart</text><text x="223" y="96" font-size="11.2" fill="#000" font-weight="normal" text-anchor="start" textLength="41.7" lengthAdjust="spacingAndGlyphs">Directive</text><text x="274.2" y="96" font-size="11.2" fill="#000" font-weight="normal" text-anchor="start" textLength="29.6" lengthAdjust="spacingAndGlyphs">Power</text><text x="313.9" y="96" font-size="11.2" fill="#000" font-weight="normal" text-anchor="start" textLength="47.5" lengthAdjust="spacingAndGlyphs">Absolute1</text><text x="370.6" y="96" font-size="11.2" fill="#000" font-weight="normal" text-anchor="start" textLength="41.1" lengthAdjust="spacingAndGlyphs">Absolute</text><text x="421.5" y="96" font-size="11.2" fill="#000" font-weight="normal" text-anchor="start" textLength="38.3" lengthAdjust="spacingAndGlyphs">Relative</text><text x="469.3" y="96" font-size="11.2" fill="#000" font-weight="normal" text-anchor="start" textLength="56.7" lengthAdjust="spacingAndGlyphs">Fields at 1m</text><text x="538.3" y="96" font-size="11.2" fill="#000" font-weight="normal" text-anchor="start" textLength="29.0" lengthAdjust="spacingAndGlyphs">Linear</text><text x="576.6" y="96" font-size="11.2" fill="#000" font-weight="normal" text-anchor="start" textLength="35.4" lengthAdjust="spacingAndGlyphs">Circular</text><text x="624.3" y="96" font-size="11.2" fill="#000" font-weight="normal" text-anchor="start" textLength="37.2" lengthAdjust="spacingAndGlyphs">Periodic</text><text x="793.2" y="96" font-size="11.2" fill="#000" font-weight="normal" text-anchor="start" textLength="40.2" lengthAdjust="spacingAndGlyphs">Toolbars</text><text x="847.2" y="96" font-size="11.2" fill="#000" font-weight="normal" text-anchor="start" textLength="21.0" lengthAdjust="spacingAndGlyphs">Help</text><text x="527.7" y="124.6" font-size="10.6" fill="#000" font-weight="normal" text-anchor="start" textLength="29.4" lengthAdjust="spacingAndGlyphs">Values</text><text x="531.1" y="148.7" font-size="11.9" fill="#000" font-weight="normal" text-anchor="start" textLength="39.9" lengthAdjust="spacingAndGlyphs">Symbol</text><text x="581.5" y="148.7" font-size="11.9" fill="#000" font-weight="normal" text-anchor="start" textLength="31.2" lengthAdjust="spacingAndGlyphs">Name</text><text x="627.3" y="148.7" font-size="11.9" fill="#000" font-weight="normal" text-anchor="start" textLength="58.5" lengthAdjust="spacingAndGlyphs">Parameters</text><text x="730.2" y="148.7" font-size="11.9" fill="#000" font-weight="normal" text-anchor="start" textLength="106.7" lengthAdjust="spacingAndGlyphs">Antenna Parameters</text><text x="580.6" y="168.3" font-size="11.7" fill="#000" font-weight="normal" text-anchor="start" textLength="38.7" lengthAdjust="spacingAndGlyphs">|Etheta|</text><text x="625.4" y="168.3" font-size="11.7" fill="#000" font-weight="normal" text-anchor="start" textLength="56.4" lengthAdjust="spacingAndGlyphs">Phi=0 [deg]</text><text x="625.4" y="183.28" font-size="11.7" fill="#000" font-weight="normal" text-anchor="start" textLength="72.7" lengthAdjust="spacingAndGlyphs">rad= 2.005129</text><text x="625.4" y="198.26" font-size="11.7" fill="#000" font-weight="normal" text-anchor="start" textLength="34.8" lengthAdjust="spacingAndGlyphs">ang= 0</text><text x="580.6" y="213.24" font-size="11.7" fill="#000" font-weight="normal" text-anchor="start" textLength="26.4" lengthAdjust="spacingAndGlyphs">|Ephi|</text><text x="625.4" y="213.24" font-size="11.7" fill="#000" font-weight="normal" text-anchor="start" textLength="56.4" lengthAdjust="spacingAndGlyphs">Phi=0 [deg]</text><text x="625.4" y="228.22" font-size="11.7" fill="#000" font-weight="normal" text-anchor="start" textLength="89.1" lengthAdjust="spacingAndGlyphs">rad= 2.84824e-06</text><text x="625.4" y="243.2" font-size="11.7" fill="#000" font-weight="normal" text-anchor="start" textLength="34.8" lengthAdjust="spacingAndGlyphs">ang= 0</text><text x="728" y="213.24" font-size="11.7" fill="#000" font-weight="normal" text-anchor="start" textLength="69.8" lengthAdjust="spacingAndGlyphs">Fr=2.65 [GHz]</text><text x="728" y="228.22" font-size="11.7" fill="#000" font-weight="normal" text-anchor="start" textLength="84.2" lengthAdjust="spacingAndGlyphs">Pr=0.821231 [W]</text><text x="728" y="243.2" font-size="11.7" fill="#000" font-weight="normal" text-anchor="start" textLength="127.7" lengthAdjust="spacingAndGlyphs">Ef=100.002 [W/W*100%]</text><text x="728" y="258.18" font-size="11.7" fill="#000" font-weight="normal" text-anchor="start" textLength="57.6" lengthAdjust="spacingAndGlyphs">Rr=0 [Ohm]</text><text x="728" y="273.16" font-size="11.7" fill="#000" font-weight="normal" text-anchor="start" textLength="83.4" lengthAdjust="spacingAndGlyphs">Pi=0.821216 [W]</text><text x="728" y="288.14" font-size="11.7" fill="#000" font-weight="normal" text-anchor="start" textLength="71.7" lengthAdjust="spacingAndGlyphs">|I|^2=0 [A^2]</text><text x="580.6" y="303.12" font-size="11.7" fill="#000" font-weight="normal" text-anchor="start" textLength="38.7" lengthAdjust="spacingAndGlyphs">|Etheta|</text><text x="625.4" y="303.12" font-size="11.7" fill="#000" font-weight="normal" text-anchor="start" textLength="56.4" lengthAdjust="spacingAndGlyphs">Phi=0 [deg]</text><text x="625.4" y="318.1" font-size="11.7" fill="#000" font-weight="normal" text-anchor="start" textLength="72.7" lengthAdjust="spacingAndGlyphs">rad= 1.870798</text><text x="625.4" y="333.08" font-size="11.7" fill="#000" font-weight="normal" text-anchor="start" textLength="34.8" lengthAdjust="spacingAndGlyphs">ang= 0</text><text x="580.6" y="348.06" font-size="11.7" fill="#000" font-weight="normal" text-anchor="start" textLength="26.4" lengthAdjust="spacingAndGlyphs">|Ephi|</text><text x="625.4" y="348.06" font-size="11.7" fill="#000" font-weight="normal" text-anchor="start" textLength="56.4" lengthAdjust="spacingAndGlyphs">Phi=0 [deg]</text><text x="625.4" y="363.04" font-size="11.7" fill="#000" font-weight="normal" text-anchor="start" textLength="89.1" lengthAdjust="spacingAndGlyphs">rad= 4.49631e-05</text><text x="625.4" y="378.02" font-size="11.7" fill="#000" font-weight="normal" text-anchor="start" textLength="34.8" lengthAdjust="spacingAndGlyphs">ang= 0</text><text x="728" y="348.06" font-size="11.7" fill="#000" font-weight="normal" text-anchor="start" textLength="76.1" lengthAdjust="spacingAndGlyphs">Fr=5.525 [GHz]</text><text x="728" y="363.04" font-size="11.7" fill="#000" font-weight="normal" text-anchor="start" textLength="78.8" lengthAdjust="spacingAndGlyphs">Pr=1.03085 [W]</text><text x="728" y="378.02" font-size="11.7" fill="#000" font-weight="normal" text-anchor="start" textLength="127.7" lengthAdjust="spacingAndGlyphs">Ef=99.9997 [W/W*100%]</text><text x="728" y="393.0" font-size="11.7" fill="#000" font-weight="normal" text-anchor="start" textLength="57.6" lengthAdjust="spacingAndGlyphs">Rr=0 [Ohm]</text><text x="728" y="407.98" font-size="11.7" fill="#000" font-weight="normal" text-anchor="start" textLength="76.6" lengthAdjust="spacingAndGlyphs">Pi=1.03086 [W]</text><text x="728" y="422.96" font-size="11.7" fill="#000" font-weight="normal" text-anchor="start" textLength="71.7" lengthAdjust="spacingAndGlyphs">|I|^2=0 [A^2]</text><text x="537.5" y="587.7" font-size="11.2" fill="#000" font-weight="normal" text-anchor="start" textLength="31.0" lengthAdjust="spacingAndGlyphs">Values</text><text x="591.8" y="587.2" font-size="11.2" fill="#000" font-weight="normal" text-anchor="start" textLength="33.0" lengthAdjust="spacingAndGlyphs">Curves</text><text x="589" y="608.5" font-size="11.4" fill="#000" font-weight="normal" text-anchor="start" textLength="76" lengthAdjust="spacingAndGlyphs">Snap at=56572</text><text x="679" y="608.5" font-size="11.4" fill="#000" font-weight="normal" text-anchor="start" textLength="47.8" lengthAdjust="spacingAndGlyphs">Scale: Lin.</text><text x="733.7" y="608.5" font-size="11.4" fill="#000" font-weight="normal" text-anchor="start" textLength="49.5" lengthAdjust="spacingAndGlyphs">Ppos: NTF</text><text x="788.9" y="608.5" font-size="11.4" fill="#000" font-weight="normal" text-anchor="start" textLength="67.3" lengthAdjust="spacingAndGlyphs">Name: patch1</text></svg>
</body></html>
